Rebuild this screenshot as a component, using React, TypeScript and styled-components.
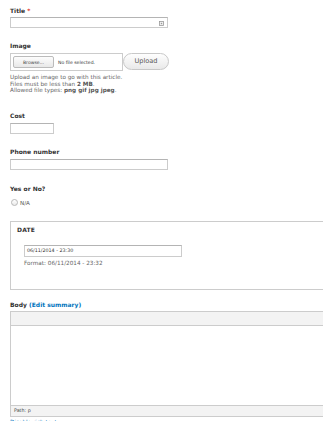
import React from "react";
import styled, { createGlobalStyle } from "styled-components";

const Global = createGlobalStyle`
  html, body { margin: 0; padding: 0; background: #fff; overflow: hidden; }
  body { font-family: "DejaVu Sans", Verdana, sans-serif; color: #333; }
`;

const Page = styled.div`
  width: 340px;
  padding: 7px 0 0 10px;
  display: flex;
  flex-direction: column;
`;

const Field = styled.div<{ $top?: number }>`
  display: flex;
  flex-direction: column;
  align-items: flex-start;
  margin-top: ${(p) => p.$top ?? 0}px;
`;

const Label = styled.div<{ $gap?: number }>`
  font-size: 6px;
  line-height: 8px;
  height: 8px;
  font-weight: bold;
  color: #333;
  margin-bottom: ${(p) => p.$gap ?? 3}px;
  white-space: nowrap;
`;

const Req = styled.span`
  color: #e0302a;
`;

const LinkText = styled.span`
  color: #0074bd;
`;

const InputBox = styled.div<{ $w: number; $h?: number }>`
  position: relative;
  width: ${(p) => p.$w}px;
  height: ${(p) => p.$h ?? 11}px;
  box-sizing: border-box;
  border: 1px solid #ccc;
  border-top-color: #b4b4b4;
  background: #fff;
  display: flex;
  align-items: center;
  padding: 0 2px;
  font-size: 4.8px;
  color: #333;
`;

const FieldIcon = styled.svg`
  position: absolute;
  right: 3px;
  top: 3px;
`;

const FileRow = styled.div`
  display: flex;
  align-items: center;
`;

const FileBox = styled.div`
  width: 113px;
  height: 18px;
  box-sizing: border-box;
  border: 1px solid #ccc;
  display: flex;
  align-items: center;
  padding-left: 2px;
  gap: 4px;
  font-size: 4.6px;
  color: #333;
`;

const Browse = styled.div`
  width: 41px;
  height: 12px;
  box-sizing: border-box;
  border: 1px solid #bbb;
  border-radius: 2px;
  background: linear-gradient(#fdfdfd, #e8e8e8);
  display: flex;
  align-items: center;
  justify-content: center;
  color: #444;
`;

const UploadBtn = styled.div`
  width: 46px;
  height: 17px;
  margin-top: -2px;
  box-sizing: border-box;
  border: 1px solid #c8c8c8;
  border-radius: 9px;
  background: linear-gradient(#fefefe, #e9e9e9);
  display: flex;
  align-items: center;
  justify-content: center;
  font-size: 6.6px;
  color: #5a5a5a;
`;

const Help = styled.div<{ $top?: number }>`
  font-size: 5.7px;
  line-height: 6.5px;
  color: #666;
  margin-top: ${(p) => p.$top ?? 3}px;
  white-space: nowrap;
  b { color: #555; }
`;

const RadioRow = styled.div`
  display: flex;
  align-items: center;
  gap: 2px;
  height: 8px;
  margin-left: 1px;
  font-size: 5.6px;
  color: #555;
`;

const Radio = styled.span`
  width: 5px;
  height: 5px;
  border-radius: 50%;
  border: 1px solid #b8b8b8;
  background: linear-gradient(#fff, #eaeaea);
`;

const Fieldset = styled.div`
  margin-top: 14px;
  width: 330px;
  height: 69px;
  box-sizing: border-box;
  border: 1px solid #ccc;
  padding: 4px 0 0 6px;
  display: flex;
  flex-direction: column;
`;

const Legend = styled.div`
  font-size: 6px;
  line-height: 8px;
  font-weight: bold;
  color: #333;
  letter-spacing: 0.2px;
`;

const FieldsetBody = styled.div`
  padding: 11px 0 0 7px;
  display: flex;
  flex-direction: column;
  align-items: flex-start;
`;

const Editor = styled.div`
  width: 330px;
  box-sizing: border-box;
  border: 1px solid #ccc;
  display: flex;
  flex-direction: column;
`;

const Toolbar = styled.div`
  height: 13px;
  background: #f3f3f3;
  border-bottom: 1px solid #ccc;
`;

const EditArea = styled.div`
  height: 79px;
  background: #fff;
  border-bottom: 1px solid #ccc;
`;

const PathBar = styled.div`
  height: 10px;
  background: #f3f3f3;
  font-size: 4.8px;
  line-height: 10px;
  padding-left: 3px;
  color: #444;
`;

const BelowLink = styled.div`
  font-size: 5.7px;
  line-height: 8px;
  color: #0074bd;
  margin-top: 1px;
`;

export default function App() {
  return (
    <>
      <Global />
      <Page>
        <Field>
          <Label $gap={2}>
            Title <Req>*</Req>
          </Label>
          <InputBox $w={158}>
            <FieldIcon width="5" height="5" viewBox="0 0 5 5">
              <rect x="0.5" y="0.5" width="4" height="4" fill="#f4f4f4" stroke="#999" strokeWidth="0.8" />
              <rect x="1.8" y="1.8" width="1.4" height="1.4" fill="#999" />
            </FieldIcon>
          </InputBox>
        </Field>

        <Field $top={14}>
          <Label>Image</Label>
          <FileRow>
            <FileBox>
              <Browse>Browse...</Browse>
              <span>No file selected.</span>
            </FileBox>
            <UploadBtn>Upload</UploadBtn>
          </FileRow>
          <Help>
            Upload an image to go with this article.
            <br />
            Files must be less than <b>2 MB</b>.
            <br />
            Allowed file types: <b>png gif jpg jpeg</b>.
          </Help>
        </Field>

        <Field $top={18}>
          <Label>Cost</Label>
          <InputBox $w={44} />
        </Field>

        <Field $top={14}>
          <Label>Phone number</Label>
          <InputBox $w={158} />
        </Field>

        <Field $top={15}>
          <Label $gap={6}>Yes or No?</Label>
          <RadioRow>
            <Radio />
            <span>N/A</span>
          </RadioRow>
        </Field>

        <Fieldset>
          <Legend>DATE</Legend>
          <FieldsetBody>
            <InputBox $w={158} $h={12}>06/11/2014 - 23:30</InputBox>
            <Help $top={3}>Format: 06/11/2014 - 23:32</Help>
          </FieldsetBody>
        </Fieldset>

        <Field $top={11}>
          <Label $gap={2}>
            Body <LinkText>(Edit summary)</LinkText>
          </Label>
          <Editor>
            <Toolbar />
            <EditArea />
            <PathBar>Path: p</PathBar>
          </Editor>
          <BelowLink>Disable rich-text</BelowLink>
        </Field>
      </Page>
    </>
  );
}
